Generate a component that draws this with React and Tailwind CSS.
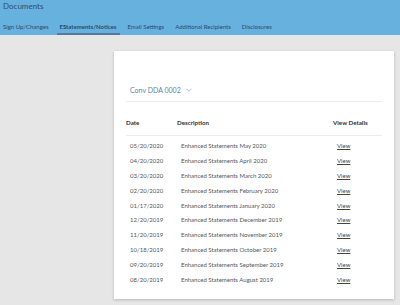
const tabs = [
  { label: "Sign Up/Changes" },
  { label: "EStatements/Notices", active: true },
  { label: "Email Settings" },
  { label: "Additional Recipients" },
  { label: "Disclosures" },
];

const rows = [
  ["05/20/2020", "Enhanced Statements May 2020"],
  ["04/20/2020", "Enhanced Statements April 2020"],
  ["03/20/2020", "Enhanced Statements March 2020"],
  ["02/20/2020", "Enhanced Statements February 2020"],
  ["01/17/2020", "Enhanced Statements January 2020"],
  ["12/20/2019", "Enhanced Statements December 2019"],
  ["11/20/2019", "Enhanced Statements November 2019"],
  ["10/18/2019", "Enhanced Statements October 2019"],
  ["09/20/2019", "Enhanced Statements September 2019"],
  ["08/20/2019", "Enhanced Statements August 2019"],
];

const App = () => {
  return (
    <div className="w-[400px] h-[305px] bg-[#e6e6e6] overflow-hidden font-['Lato',sans-serif]">
      <header className="h-[35px] bg-[#67b1df] flex flex-col">
        <div className="h-[17px] pl-[3px] pt-[0px] text-[8px] leading-[12px] text-[#2f4d6e]">Documents</div>
        <nav className="flex items-stretch pl-[3px] gap-[11px] h-[18px]">
          {tabs.map((t) => (
            <div
              key={t.label}
              className={
                "relative flex items-center text-[6px] text-[#2c4a6c] " +
                (t.active ? "font-bold" : "")
              }
            >
              {t.label}
              {t.active && (
                <div className="absolute left-[-3px] right-[-4px] bottom-0 h-[2px] bg-[#56799f]" />
              )}
            </div>
          ))}
        </nav>
      </header>

      <div className="ml-[114px] mt-[16px] w-[280px] h-[248px] bg-white shadow-[0_1px_3px_rgba(0,0,0,0.2)] px-[12px] pt-[32px]">
        <div className="flex items-center gap-[4px] pl-[4px] text-[7px] text-[#5f84a8] h-[14px]">
          Conv DDA 0002
          <svg width="6" height="4" viewBox="0 0 6 4" className="ml-[1px]">
            <path d="M0.5 0.8 L3 3.2 L5.5 0.8" fill="none" stroke="#8aa3bd" strokeWidth="0.7" />
          </svg>
        </div>
        <div className="mt-[4px] h-px bg-[#ececec]" />

        <div className="flex items-center h-[33px] pt-[8px] text-[6.2px] font-bold text-[#333]">
          <div className="w-[51px]">Date</div>
          <div className="w-[156px]">Description</div>
          <div>View Details</div>
        </div>
        <div className="h-px bg-[#ececec]" />

        <div className="pt-[2px]">
          {rows.map(([d, desc]) => (
            <div key={d} className="flex items-center h-[14.9px] text-[6px] text-[#555]">
              <div className="w-[51px] pl-[4px]">{d}</div>
              <div className="w-[156px] pl-[4px]">{desc}</div>
              <div className="pl-[4px] underline text-[#444]">View</div>
            </div>
          ))}
        </div>
      </div>
    </div>
  );
};

export default App;
